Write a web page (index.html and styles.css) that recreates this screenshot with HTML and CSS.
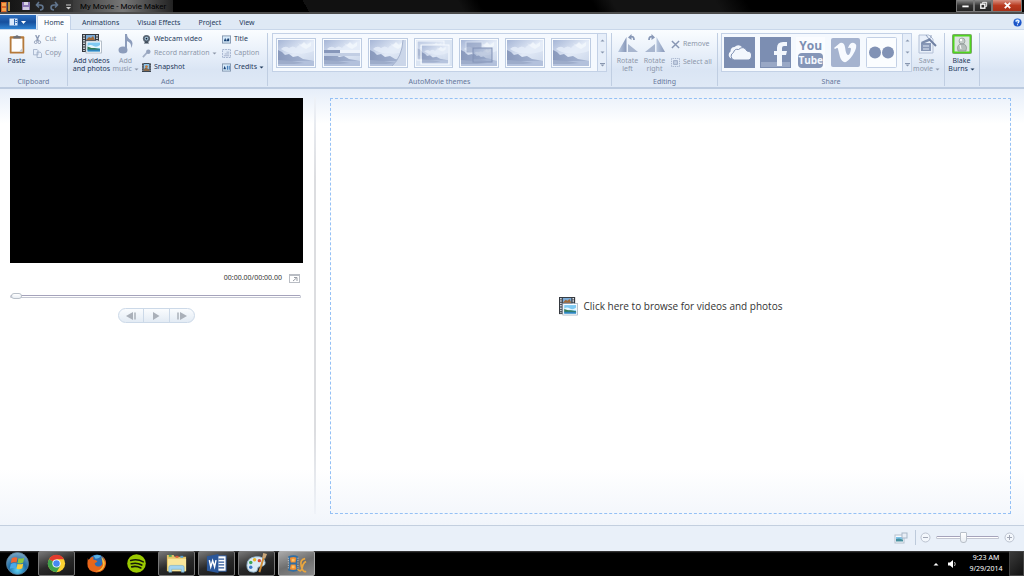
FILE: index.html
```html
<!DOCTYPE html>
<html lang="en">
<head>
    <meta charset="UTF-8">
    <meta name="viewport" content="width=device-width, initial-scale=1.0">
    <title>My Movie - Movie Maker</title>
    <link rel="stylesheet" href="styles.css">
</head>
<body>
    <!-- Shared drawings -->
    <svg class="defs" aria-hidden="true">
        <defs>
            <linearGradient id="sky" x1="0" y1="0" x2="1" y2="1">
                <stop offset="0" stop-color="#a6b6d6"/>
                <stop offset="0.5" stop-color="#e2eaf7"/>
                <stop offset="1" stop-color="#c9d5e9"/>
            </linearGradient>
            <linearGradient id="grey" x1="0" y1="0" x2="1" y2="0">
                <stop offset="0" stop-color="#b9c8df"/>
                <stop offset="1" stop-color="#8797b8"/>
            </linearGradient>
            <linearGradient id="hill" x1="0" y1="0" x2="1" y2="0">
                <stop offset="0" stop-color="#8999bc"/>
                <stop offset="1" stop-color="#a9b8d5"/>
            </linearGradient>
            <radialGradient id="orb" cx="0.5" cy="0.8" r="0.8">
                <stop offset="0" stop-color="#5fd0f0"/>
                <stop offset="0.5" stop-color="#1f6ea8"/>
                <stop offset="1" stop-color="#7fa9c4"/>
            </radialGradient>
            <symbol id="scene" viewBox="0 0 36 26">
                <rect width="36" height="26" fill="url(#sky)"/>
                <path d="M3 9q4-4 8-1q4-3 7 0q5-6 10-4l8-3v10q-12 4-18 2q-8 1-15-4z" fill="#e6edf9" opacity="0.8"/>
                <path d="M20 3l3 2 3-3 3 3 4-3v4l-5 3-4-2z" fill="#f3f7fd" opacity="0.8"/>
                <path d="M0 10l4 2 3 3 4-1 4 3 5-1 5 3 6 1 5 1v1H0z" fill="url(#hill)"/>
                <path d="M0 21h36v5H0z" fill="#b3c1dc"/>
                <path d="M0 20l14 1 12 2-10 1H0z" fill="#9dacca"/>
            </symbol>
            <symbol id="film" viewBox="0 0 20 20">
                <rect width="17" height="18" fill="#35393f"/>
                <path d="M2 1v16M15 1v16" stroke="#dfe6ee" stroke-width="1.6" stroke-dasharray="1.5 1"/>
                <rect x="4" y="1" width="9" height="5" fill="#7cabd6"/>
                <path d="M4 6l3-3 2 1 2-2 2 4z" fill="#a06a3a"/>
                <rect x="4" y="7" width="9" height="10" fill="#4c7eb0"/>
                <rect x="4" y="7" width="15.5" height="12" fill="#fbfdff" stroke="#9aa5b3" stroke-width="0.7"/>
                <rect x="5.5" y="8.5" width="12.5" height="9" fill="#7fcaf3"/>
                <path d="M5.5 12q3-2 6 0t6.500-1v3H5.500z" fill="#e4f6fd"/>
                <path d="M5.5 12.500l4 1.500h3l5.500 1v1H5.500z" fill="#357b55"/>
                <path d="M5.5 15.500H18v2H5.500z" fill="#2f86c0"/>
            </symbol>
            <symbol id="triangle" viewBox="0 0 5 3"><path d="M.5.5h4l-2 2z" fill="currentColor"/></symbol>
        </defs>
    </svg>

    <header class="titlebar">
        <div class="quick">
            <svg class="appicon" viewBox="0 0 10 11"><rect y="1" width="6" height="10" fill="#d9662a"/><path d="M1 2h4v3H1zM1 7h4v3H1z" fill="#f3a54c"/><path d="M8 1v9" stroke="#e7b94d" stroke-width="1.5"/><path d="M6 1v10" stroke="#3a5c86"/></svg>
            <button class="tool" aria-label="Save"><svg viewBox="0 0 10 10"><rect x="1" y="1" width="8" height="8" fill="#8a76b4"/><rect x="3" y="1" width="4" height="3" fill="#d9d4e6"/><rect x="2" y="6" width="6" height="3" fill="#cfc8e0"/></svg></button>
            <button class="tool" aria-label="Undo"><svg viewBox="0 0 10 10"><path d="M2 4h3q3 0 3 2.500T5 9M4 1L1.500 4 4 6.500" fill="none" stroke="#62768e" stroke-width="1.6"/></svg></button>
            <button class="tool" aria-label="Redo"><svg viewBox="0 0 10 10"><path d="M8 4H5Q2 4 2 6.500T5 9M6 1l2.500 3L6 6.500" fill="none" stroke="#62768e" stroke-width="1.6"/></svg></button>
            <button class="tool" aria-label="Customize"><svg viewBox="0 0 10 10"><path d="M3 4h5" stroke="#ccc"/><path d="M3 6h5L5.500 8.500z" fill="#ccc"/></svg></button>
        </div>
        <h1>My Movie - Movie Maker</h1>
        <div class="window-buttons">
            <button aria-label="Minimize"><svg viewBox="0 0 10 10"><path d="M1.500 6h7" stroke="#fff" stroke-width="2"/></svg></button>
            <button aria-label="Restore"><svg viewBox="0 0 10 10"><path d="M4 3V1.500h4.500V6H7" fill="none" stroke="#fff"/><rect x="2" y="3.500" width="4.500" height="4.500" fill="none" stroke="#fff" stroke-width="1.5"/></svg></button>
            <button class="close" aria-label="Close"><svg viewBox="0 0 10 10"><path d="M2 2l6 6M8 2L2 8" stroke="#fff" stroke-width="2"/></svg></button>
        </div>
    </header>

    <nav class="tabs">
        <button class="file" aria-label="Movie Maker menu"><svg viewBox="0 0 18 8"><rect x="0.500" y="0.500" width="8" height="7" fill="#dbe9fb"/><path d="M5.500 1v6M6.500 2.500H8M6.500 4.500H8" stroke="#2b66b0"/><path d="M12 3h5l-2.500 3z" fill="#fff"/></svg></button>
        <a class="active" href="#home">Home</a>
        <a href="#animations">Animations</a>
        <a href="#effects">Visual Effects</a>
        <a href="#project">Project</a>
        <a href="#view">View</a>
        <button class="help" aria-label="Help"><svg viewBox="0 0 10 10"><circle cx="5" cy="5" r="4.5" fill="#1c55c8"/><ellipse cx="5" cy="3" rx="3" ry="2" fill="#6fa4ee"/><path d="M3.500 3.800Q3.700 2.500 5 2.500T6.500 3.800T5 5.800M5 7v1" fill="none" stroke="#fff" stroke-width="1.2"/></svg></button>
    </nav>

    <div class="ribbon">
        <section class="group clipboard">
            <div class="controls">
                <button class="big"><svg viewBox="0 0 20 22"><rect x="2" y="2.500" width="16" height="19" rx="1" fill="#b5793a"/><rect x="4" y="5" width="12" height="14.5" fill="#fdfdfd"/><path d="M12 19.500l4-4v4z" fill="#c9cdd4"/><path d="M6 5V2.500h2Q10 0 12 2.500h2V5z" fill="#6c6f76"/></svg>Paste</button>
                <div class="stack">
                    <button class="small off"><svg viewBox="0 0 10 10"><path d="M3 0l3 6.500M7 0L4 6.500" stroke="#8d9bb5" stroke-width="1.5"/><circle cx="3" cy="8" r="1.5" fill="none" stroke="#8d9bb5"/><circle cx="7" cy="8" r="1.5" fill="none" stroke="#8d9bb5"/></svg>Cut</button>
                    <button class="small off"><svg viewBox="0 0 10 10"><path d="M.5.5h4l1 1v5h-5zM4.500 3.500H8l1.500 1.500v4.500h-5z" fill="#e6eefa" stroke="#a3b1ca"/></svg>Copy</button>
                </div>
            </div>
            <h2>Clipboard</h2>
        </section>
        <section class="group add">
            <div class="controls">
                <button class="big wide"><svg><use href="#film"/></svg><span>Add videos<br>and photos</span></button>
                <button class="big off"><svg viewBox="0 0 20 20"><path d="M9 15V0h2q0 4 4 6q3 3 0 8q1-5-4-7v9z" fill="#8c9cbb"/><ellipse cx="7" cy="16" rx="4.5" ry="3.5" fill="#8c9cbb"/></svg><span>Add<br>music <svg class="arrow"><use href="#triangle"/></svg></span></button>
                <div class="stack">
                    <button class="small"><svg viewBox="0 0 10 10"><circle cx="5" cy="4" r="4" fill="#596675"/><circle cx="5" cy="4" r="2" fill="#a9cbe4"/><circle cx="5" cy="4" r="1" fill="#17212c"/><path d="M2 9.500L4 7h2l2 2.500z" fill="#3f4c5b"/></svg>Webcam video</button>
                    <button class="small off"><svg viewBox="0 0 10 10"><path d="M1 9l4.500-5" stroke="#a2afc6" stroke-width="1.8"/><circle cx="7" cy="3" r="2.5" fill="#96a4be"/></svg>Record narration <svg class="arrow"><use href="#triangle"/></svg></button>
                    <button class="small"><svg viewBox="0 0 10 10"><rect width="10" height="10" fill="#333a44"/><path d="M1 0v10M9 0v10" stroke="#dde3ea" stroke-dasharray="1 1"/><rect x="2" y="1" width="6" height="8" fill="#8cc4ea"/><path d="M2 7l2-2 4 2v2H2z" fill="#8a6a4c"/><circle cx="5" cy="4" r="1.5" fill="#c77a3a"/></svg>Snapshot</button>
                </div>
                <div class="stack right">
                    <button class="small"><svg viewBox="0 0 10 10"><rect x="0.500" y="1" width="9" height="8" fill="#d8ebfb" stroke="#8295ad"/><path d="M2 7l1.500-4L5 7z" fill="#163f70"/><path d="M5 7V5h1V4h2v3z" fill="#163f70"/></svg>Title</button>
                    <button class="small off"><svg viewBox="0 0 10 10"><rect x="0.500" y="0.500" width="9" height="9" fill="#e1eaf7" stroke="#9cacc8" stroke-dasharray="2 1"/><path d="M2 7.500h6M3 5.500h5M5 3.500h3" stroke="#a0aec7"/></svg>Caption</button>
                    <button class="small"><svg viewBox="0 0 10 10"><rect x="0.500" y="1" width="9" height="8" fill="#d8ebfb" stroke="#8295ad"/><path d="M1.500 7L3 3l1.500 4z" fill="#163f70"/><path d="M6 3v4.500M8 3v4.500" stroke="#3c78b8" stroke-width="1.2"/></svg>Credits <svg class="arrow"><use href="#triangle"/></svg></button>
                </div>
            </div>
            <h2>Add</h2>
        </section>
        <section class="group themes">
            <div class="gallery">
                <button aria-label="No theme"><svg><use href="#scene"/></svg></button>
                <button aria-label="Contemporary"><svg viewBox="0 0 36 26"><use href="#scene"/><path d="M0 10h16v3H0z" fill="#8797ba"/><path d="M0 13h36v3H0z" fill="#c2cee4"/><path d="M16 10h20v3H16z" fill="#eef3fb"/></svg></button>
                <button aria-label="Cinematic"><svg viewBox="0 0 36 26"><use href="#scene"/><path d="M33 0q-1 17-11 26h14V0z" fill="#cbd6e9"/><path d="M33 0q-1 17-11 26" fill="none" stroke="#a5b3ce"/></svg></button>
                <button aria-label="Fade"><svg viewBox="0 0 36 26"><rect width="36" height="26" fill="#dbe5f3"/><use href="#scene" x="1" y="1" width="27" height="19" opacity="0.6"/><rect x="1" y="1" width="27" height="19" fill="none" stroke="#f4f8fd"/><use href="#scene" x="6" y="5" width="26" height="19" opacity="0.9"/><rect x="5" y="5" width="28" height="19" fill="none" stroke="#f8fbff"/></svg></button>
                <button aria-label="Pan and zoom"><svg viewBox="0 0 36 26"><use href="#scene"/><rect x="5" y="2" width="16" height="11" fill="#8a9abd" opacity="0.6" stroke="#dfe7f5"/><use href="#scene" x="12" y="8" width="19" height="14"/><rect x="12" y="8" width="19" height="14" fill="#8a9abd" fill-opacity="0.4" stroke="#8191b5"/></svg></button>
                <button aria-label="Black and white"><svg><use href="#scene"/></svg></button>
                <button aria-label="Sepia"><svg><use href="#scene"/></svg></button>
                <div class="scroller">
                    <button aria-label="Scroll up"><svg class="up"><use href="#triangle"/></svg></button>
                    <button aria-label="Scroll down"><svg><use href="#triangle"/></svg></button>
                    <button class="more" aria-label="More themes"><svg><use href="#triangle"/></svg></button>
                </div>
            </div>
            <h2>AutoMovie themes</h2>
        </section>
        <section class="group editing">
            <div class="controls">
                <button class="big off"><svg viewBox="0 0 20 20"><path d="M0 18L8.500 3v15z" fill="url(#grey)"/><path d="M10 10l10 8H10z" fill="#a8b6cf"/><path d="M12 3q4-1.500 4 3" fill="none" stroke="#8797b6" stroke-width="1.8"/><path d="M10 3.500L13.500 0v6z" fill="#8797b6"/></svg><span>Rotate<br>left</span></button>
                <button class="big off"><svg viewBox="0 0 20 20"><path d="M20 18L11.500 3v15z" fill="url(#grey)"/><path d="M10 10L0 18h10z" fill="#a8b6cf"/><path d="M8 3Q4 1.500 4 6" fill="none" stroke="#8797b6" stroke-width="1.8"/><path d="M10 3.500L6.500 0v6z" fill="#8797b6"/></svg><span>Rotate<br>right</span></button>
                <div class="stack pair">
                    <button class="small off"><svg viewBox="0 0 10 10"><path d="M1 1l8 8M9 1L1 9" stroke="#8796b3" stroke-width="1.6"/></svg>Remove</button>
                    <button class="small off"><svg viewBox="0 0 10 10"><rect x="0.500" y="0.500" width="9" height="9" fill="none" stroke="#95a4bf" stroke-dasharray="1 1"/><rect x="3" y="3" width="4" height="4" fill="#c8d4e7" stroke="#95a4bf"/></svg>Select all</button>
                </div>
            </div>
            <h2>Editing</h2>
        </section>
        <section class="group share">
            <div class="controls">
                <div class="gallery">
                    <button aria-label="OneDrive"><svg viewBox="0 0 31 31"><rect width="31" height="31" fill="#7c8eb2"/><path d="M7 21.500a4 4 0 0 1-.5-7q0-4.500 4-4.500q4-3.500 8 0.500" fill="#f3f7fd"/><path d="M10 23a4 4 0 0 1-.5-7.500q1-4 5-3q5-4.500 8.500 1.500q5 .5 4.500 5t-4.500 4z" fill="#f3f7fd" stroke="#7c8eb2"/></svg></button>
                    <button aria-label="Facebook"><svg viewBox="0 0 31 31"><rect width="31" height="31" fill="#7c8eb2"/><path d="M1 25h29v5H1z" fill="#99a8c6"/><path d="M17 29V18h-3v-4h3v-3q0-6 6-6h4v4h-3q-2 0-2 2v3h5l-1 4h-4v11z" fill="#f3f7fd"/></svg></button>
                    <button class="youtube"><span>You</span><span class="tube">Tube</span></button>
                    <button aria-label="Vimeo"><svg viewBox="0 0 31 31"><rect x="1" y="1" width="29" height="29" rx="2" fill="#a5b3cf"/><path d="M4 11l6-5q4-1 5 4q1 8 3 8t3-6q0-2-3-1q2-6 6-5q4 1 1 8q-4 8-9 11q-4 1-6-5l-2-8q0-2-3 0z" fill="#f7faff"/></svg></button>
                    <button aria-label="Flickr"><svg viewBox="0 0 31 31"><rect x="0.500" y="0.500" width="30" height="30" rx="1" fill="#fbfdff" stroke="#c3d0e5"/><circle cx="9" cy="15.500" r="6" fill="#8192b5"/><circle cx="22" cy="15.500" r="6" fill="#8192b5"/></svg></button>
                    <div class="scroller">
                        <button aria-label="Scroll up"><svg class="up"><use href="#triangle"/></svg></button>
                        <button aria-label="Scroll down"><svg><use href="#triangle"/></svg></button>
                        <button class="more" aria-label="More services"><svg><use href="#triangle"/></svg></button>
                    </div>
                </div>
                <button class="big save off"><svg viewBox="0 0 20 20"><path d="M2 1h10l4 4v14H2z" fill="#e9f0fa" stroke="#b3c0d6"/><rect x="4" y="9" width="10" height="8" fill="#8797b6"/><path d="M4 8l9-4 1 2.500L5 10zM5 2l3 2" fill="#7c8dad"/><path d="M6 12h6M6 15h6" stroke="#dfe8f5"/><path d="M12 5l7 7" stroke="#6f80a2" stroke-width="2"/><path d="M9 1l3 4M14 1v3" stroke="#8d9dbb"/></svg><span>Save<br>movie <svg class="arrow"><use href="#triangle"/></svg></span></button>
            </div>
            <h2>Share</h2>
        </section>
        <section class="group account">
            <div class="controls">
                <button class="big"><svg viewBox="0 0 20 20"><rect x="0.500" y="0.500" width="19" height="19" rx="1" fill="#4fd51e" stroke="#78a868"/><rect x="2.500" y="2.500" width="15" height="15" fill="#dce4e0"/><circle cx="10" cy="7" r="3" fill="#c4cbc9" stroke="#838c8a" stroke-width="0.6"/><path d="M6 17q-2-7 4-7t4 7z" fill="#b6bebc" stroke="#7d8684" stroke-width="0.6"/><circle cx="9" cy="6" r="1.2" fill="#fff"/><path d="M8 11l1 4" stroke="#fff"/></svg><span>Blake<br>Burns <svg class="arrow"><use href="#triangle"/></svg></span></button>
            </div>
        </section>
    </div>

    <main class="workspace">
        <section class="preview">
            <div class="screen"></div>
            <div class="time">
                <span>00:00.00/00:00.00</span>
                <button aria-label="Full screen"><svg viewBox="0 0 11 9"><rect x="0.500" y="0.500" width="10" height="8" fill="#fff" stroke="#b9bdc4"/><path d="M0 1h11" stroke="#b9bdc4" stroke-width="2"/><path d="M4 7l3.500-3M5 3.500h3V7" fill="none" stroke="#989da5"/></svg></button>
            </div>
            <input class="seek" type="range" min="0" max="100" value="0" aria-label="Position">
            <div class="transport">
                <button aria-label="Previous frame"><svg viewBox="0 0 10 8"><path d="M7 0v8L0 4z" fill="#aab0b9"/><path d="M9 .5v7" stroke="#aab0b9" stroke-width="1.5"/></svg></button>
                <button aria-label="Play"><svg viewBox="0 0 10 8"><path d="M2 0v8l6.500-4z" fill="#aab0b9"/></svg></button>
                <button aria-label="Next frame"><svg viewBox="0 0 10 8"><path d="M3 0v8l7-4z" fill="#aab0b9"/><path d="M1 .5v7" stroke="#aab0b9" stroke-width="1.5"/></svg></button>
            </div>
        </section>
        <button class="dropzone"><svg><use href="#film"/></svg>Click here to browse for videos and photos</button>
    </main>

    <footer class="status">
        <button aria-label="Thumbnail size"><svg class="thumbs" viewBox="0 0 14 12"><rect x="1" y="3" width="9" height="8" fill="#f8fbff" stroke="#b5c0cd"/><path d="M2 5h7v2H2z" fill="#7fc4ea"/><path d="M2 7l3-.5 4 1v2H2z" fill="#468f9e"/><rect x="8" y="1" width="5" height="5" fill="#e8eef6" stroke="#a9b7c8"/></svg></button>
        <div class="zoom">
            <button aria-label="Zoom out"><svg viewBox="0 0 11 11"><circle cx="5.5" cy="5.5" r="4.5" fill="#f3f7fc" stroke="#bcc3d0"/><path d="M3 5.500h5" stroke="#a1a7b5"/></svg></button>
            <input type="range" min="0" max="100" value="42" aria-label="Zoom">
            <button aria-label="Zoom in"><svg viewBox="0 0 11 11"><circle cx="5.5" cy="5.5" r="4.5" fill="#f3f7fc" stroke="#bcc3d0"/><path d="M3 5.500h5M5.500 3v5" stroke="#a1a7b5"/></svg></button>
        </div>
    </footer>

    <div class="taskbar">
        <button class="task start" aria-label="Start"><svg viewBox="0 0 24 24"><circle cx="12" cy="12" r="11.5" fill="url(#orb)" stroke="#5d7f97" stroke-width="0.8"/><path d="M6 6.500q3-2 6-.5l-1 5q-3-1-6 .5z" fill="#f0652f"/><path d="M13 6.500q3 1 6-.5l-1 5q-3 1.500-6 .5z" fill="#8cc63e"/><path d="M5 12.500q3-1.500 6-.5l-1 5q-3-1-6 .5z" fill="#4aa8e8"/><path d="M12 12.500q3 1 6-.5l-1 5q-3 1.500-6 .5z" fill="#fccb35"/></svg></button>
        <button class="task open" aria-label="Google Chrome"><svg viewBox="0 0 24 24"><circle cx="12" cy="12" r="9" fill="#fdd231"/><path d="M12 12L4.200 7.500A9 9 0 0 1 19.800 7.500H12z" fill="#e33b2e"/><path d="M12 12L4.200 7.500A9 9 0 0 0 12 21l4-6.700z" fill="#3fa34d"/><circle cx="12" cy="12" r="4.3" fill="#fff"/><circle cx="12" cy="12" r="3.4" fill="#4688f1"/></svg></button>
        <button class="task" aria-label="Firefox"><svg viewBox="0 0 24 24"><circle cx="12.5" cy="11.5" r="9" fill="#2d6db5"/><path d="M9 4q4-2 8 0q-2 3-6 3z" fill="#5db4e5"/><path d="M3 6q0 2 1 2q2-3 5-3q-1 2 0 3q3 0 4 2l-3 2q1 4 5 3q4-1 3-6q2 1 2 0q-1-4-3-5q5 3 5 8q-1 9-10 9.500Q2 20 2.500 12z" fill="#e8661b"/><path d="M17 5q5 5 3 10q-3 6-9 5q7-1 8-7z" fill="#fac43a"/></svg></button>
        <button class="task" aria-label="Spotify"><svg viewBox="0 0 24 24"><circle cx="12" cy="12" r="9.7" fill="#9ac900"/><path d="M6 8.800q7-2 13 1.500M6.500 12.300q6-1.600 11 1.300M7 15.500q5-1.300 9.500 1.200" fill="none" stroke="#151a08" stroke-width="1.7" stroke-linecap="round"/></svg></button>
        <button class="task open" aria-label="Windows Explorer"><svg viewBox="0 0 24 24"><path d="M2 3h7l1 2h12v15H2z" fill="#e3c365"/><path d="M3 7h19v13H3z" fill="#f8e69b"/><path d="M4 3h3v2H4z" fill="#4da75a"/><path d="M11 4h3v2h-3z" fill="#db5a3d"/><path d="M16 4h3v2h-3z" fill="#4f9bd4"/><path d="M4 21v-5q0-2 2-2h12q2 0 2 2v5h-3v-3H7v3z" fill="#a3d4ef" stroke="#6ea7c9" stroke-width="0.6"/></svg></button>
        <button class="task open" aria-label="Microsoft Word"><svg viewBox="0 0 24 24"><rect x="12" y="4" width="10" height="16" fill="#fff" stroke="#2b579a"/><path d="M14 7.500h6M14 10.500h6M14 13.500h6M14 16.500h6" stroke="#2b579a" stroke-width="1.2"/><path d="M2 4.500L14 2v20L2 19.500z" fill="#2b579a"/><path d="M4.500 8.500l1.500 7 2-6.500 2 6.500 1.500-7" fill="none" stroke="#fff" stroke-width="1.5"/></svg></button>
        <button class="task open" aria-label="Paint"><svg viewBox="0 0 24 24"><path d="M2 14Q2 6 11 5t10 6q0 4-5 4q-3 0-3 3t-4 3q-7 0-7-7z" fill="#dcebf5" stroke="#94b8cf"/><circle cx="6" cy="11" r="1.8" fill="#3fa657"/><circle cx="10" cy="8" r="1.8" fill="#e9b92f"/><circle cx="15" cy="9" r="1.8" fill="#d64b37"/><circle cx="6" cy="16" r="1.8" fill="#3a78c9"/><path d="M20 4l-5 17" stroke="#cd8b37" stroke-width="2"/><path d="M18 6l1-5 4 1-2 5z" fill="#c9a77a"/></svg></button>
        <button class="task open current" aria-label="Movie Maker"><svg viewBox="0 0 24 24"><path d="M3 5q6-3 11 0-3 7 0 14-5 3-11 0 3-7 0-14z" fill="#2f6ea5"/><path d="M5 6q4-1.500 7 0l-1 5H6zM6 13h5l1 5q-3 1.500-7 0z" fill="#f08b31"/><path d="M7 7h3v3H7zM7 14h3v3H7z" fill="#ffc15e"/><path d="M3.500 6v12M13.500 6v12" stroke="#dfeaf3" stroke-width="0.8" stroke-dasharray="1 1.500"/><path d="M13 18q4 4 5-2q1-5 4-6M21 7q-6 1-4 8t5 5" fill="none" stroke="#e9a63f" stroke-width="1.8"/></svg></button>
        <div class="tray">
            <button aria-label="Show hidden icons"><svg viewBox="0 0 10 10"><path d="M2.500 6.500L5 4l2.500 2.500z" fill="#fff"/></svg></button>
            <button aria-label="Volume"><svg viewBox="0 0 10 10"><path d="M1 3.500h2L6 1v8L3 6.500H1z" fill="#fff"/><path d="M7.500 3q1.500 2 0 4" fill="none" stroke="#bbb"/></svg></button>
            <div class="clock"><time>9:23 AM</time><time>9/29/2014</time></div>
            <button class="desktop" aria-label="Show desktop"></button>
        </div>
    </div>
</body>
</html>
```

FILE: styles.css
```css
* { box-sizing: border-box; }
body { margin: 0; height: 100vh; display: flex; flex-direction: column; background: #000; color: #1e395b; font: 7px/8px "Noto Sans", "Open Sans", sans-serif; overflow: hidden; }
button { margin: 0; padding: 0; border: none; background: none; color: inherit; font: inherit; cursor: pointer; display: flex; align-items: center; justify-content: center; }
svg { display: block; flex: none; }
h1, h2 { margin: 0; font-size: 7px; font-weight: normal; }
a { color: inherit; text-decoration: none; }
.defs { position: absolute; width: 0; height: 0; }
.arrow { display: inline-block; width: 5px; height: 3px; vertical-align: middle; }

/* title bar */
.titlebar { display: flex; flex: none; height: 14px; background: linear-gradient(60deg, #000 30%, #111 30%, #111 45%, #000 47%, #000 58%, #131313 60%, #131313 70%, #000 73%); border-bottom: 2px solid #4c4c4c; }
.quick { display: flex; align-items: center; gap: 4px; padding-left: 1px; background: linear-gradient(90deg, #111, #333); }
.appicon { width: 10px; height: 11px; margin-right: 6px; }
.tool svg { width: 10px; height: 10px; }
.titlebar h1 { padding: 1px 7px; font-family: Roboto, "Noto Sans", sans-serif; font-size: 8px; line-height: 11px; color: #000; background: linear-gradient(90deg, #3a3a3a, #777 50%, #222); }
.window-buttons { display: flex; margin: 0 2px 0 auto; height: 12px; }
.window-buttons button { width: 18px; border: 1px solid #777; border-top: none; background: linear-gradient(#8a8a8a, #333 50%, #222); }
.window-buttons .close { width: 30px; background: linear-gradient(#d99282, #b93a20 50%, #a83018); }
.window-buttons svg { width: 9px; height: 9px; }

/* tabs */
.tabs { display: flex; flex: none; height: 16px; padding-top: 1px; background: #dfe9f5; border-bottom: 1px solid #c9d7ea; }
.tabs a { padding: 3px 9px; line-height: 9px; }
.tabs .active { margin: 0 2px -1px 1px; padding: 2px 6px; background: linear-gradient(#fff, #f9fcff); border: 1px solid #c3d2e8; border-bottom: none; border-radius: 2px 2px 0 0; }
.file { width: 36px; background: linear-gradient(#2d6fc0, #174f9c 50%, #2f83d3); }
.file svg { width: 18px; height: 8px; }
.help { margin-left: auto; width: 14px; }
.help svg { width: 9px; height: 9px; }

/* ribbon */
.ribbon { display: flex; flex: none; height: 59px; padding: 3px 0 1px; background: linear-gradient(#fafdff, #e6eef9 45%, #dae5f4 70%, #dfe9f6); border-bottom: 2px solid #bccbe0; }
.group { display: flex; flex-direction: column; border-right: 1px solid #c0cee2; padding: 0 3px; }
.group h2 { margin-top: auto; text-align: center; line-height: 9px; color: #66779a; }
.controls { display: flex; align-items: flex-start; }
.clipboard { width: 68px; }
.add { width: 200px; }
.themes { width: 344px; padding: 0 4px; }
.editing { width: 106px; padding: 0 2px; }
.share { width: 227px; }
.account { width: 35px; }
.big { flex-direction: column; width: 27px; white-space: nowrap; text-align: center; }
.big > svg { width: 20px; height: 20px; margin: 1px 0 3px; }
.wide { width: 41px; }
.off { color: #8d97aa; }
.stack { display: flex; flex-direction: column; gap: 4px; margin-left: 3px; padding-top: 1px; }
.right { margin-left: auto; }
.pair { gap: 8px; padding-top: 6px; }
.small { gap: 3px; height: 10px; justify-content: flex-start; white-space: nowrap; }
.small svg:first-child { width: 9px; height: 9px; }
.small .arrow { margin-left: -1px; }
.gallery { display: flex; flex: none; gap: 6px; height: 39px; padding-left: 3px; align-items: center; background: #f5f9fe; border: 1px solid #c3d1e6; }
.themes .gallery > button { width: 40px; height: 30px; background: #f9fcff; border: 1px solid #bdcce2; }
.themes .gallery > button svg { width: 36px; height: 26px; }
.share .gallery { gap: 5px; width: 191px; padding-left: 2px; }
.share .gallery > button, .share .gallery > button svg { width: 31px; height: 31px; }
.scroller { display: flex; flex-direction: column; width: 9px; height: 100%; margin-left: auto; border-left: 1px solid #c3d1e6; background: #e6eef9; color: #8997b0; }
.scroller button { flex: 1; }
.scroller svg { width: 5px; height: 3px; }
.scroller .up { transform: rotate(180deg); }
.more svg { border-top: 1px solid #8997b0; height: 4px; }
.share .youtube { flex-direction: column; font: bold 12px/15px "Open Sans", sans-serif; color: #7c8eb2; background: #fafcff; }
.tube { width: 25px; border-radius: 4px; background: #8596b8; color: #f3f7fd; font-size: 10px; }
.save { width: 30px; }

/* workspace */
.workspace { display: flex; flex: 1; padding: 8px 13px 11px 10px; background: linear-gradient(#e6eef9, #fff 35px, #fff 380px, #f1f5fb); }
.preview { flex: none; width: 306px; padding: 1px 11px 0 0; border-right: 2px solid; border-image: linear-gradient(#eef2f8, #dcdde0 20%, #dcdde0 80%, #eff3f9) 1; }
.screen { height: 165px; background: #000; }
.time { display: flex; justify-content: flex-end; align-items: center; gap: 7px; height: 10px; margin: 10px 3px 0 0; color: #333; }
.time svg { width: 11px; height: 9px; }
input[type="range"] { display: block; margin: 0; height: 10px; appearance: none; background: none; }
input[type="range"]::-webkit-slider-runnable-track { height: 3px; border: 1px solid #c3c6d2; border-top-color: #a5a3bb; border-radius: 2px; background: #fff; }
input[type="range"]::-webkit-slider-thumb { appearance: none; background: linear-gradient(#fff, #e9eef4); border: 1px solid #b9c0c9; }
.preview .seek { width: 291px; margin: 8px 0 7px; }
.seek::-webkit-slider-thumb { width: 11px; height: 6px; margin-top: -3px; border-radius: 3px; }
.transport { display: flex; width: 77px; height: 15px; margin: 0 auto; border: 1px solid #ccd9e8; border-radius: 8px; background: linear-gradient(#fafcfe, #e3ebf4); }
.transport button { flex: 1; }
.transport button + button { border-left: 1px solid #ccd9e8; }
.transport svg { width: 10px; height: 8px; }
.dropzone { flex: 1; gap: 6px; margin: 1px 0 0 14px; border: 1px dashed #94c0f5; font-family: "Open Sans", sans-serif; font-size: 10px; line-height: 14px; color: #333; }
.dropzone svg { width: 19px; height: 19px; }

/* status bar */
.status { display: flex; flex: none; align-items: center; justify-content: flex-end; gap: 7px; height: 26px; padding: 0 9px 2px 0; background: #e9f0f9; border-top: 1px solid #c3cfdf; }
.thumbs { width: 14px; height: 12px; }
.zoom { display: flex; align-items: center; gap: 5px; padding-left: 4px; border-left: 1px solid #bdcadb; height: 15px; }
.zoom svg { width: 11px; height: 11px; }
.zoom input { width: 63px; }
.zoom input::-webkit-slider-thumb { width: 7px; height: 11px; margin-top: -5px; border-radius: 1px 1px 3px 3px; }

/* taskbar */
.taskbar { display: flex; flex: none; gap: 3px; height: 25px; background: linear-gradient(#444, #000 2px); color: #fff; }
.task { width: 37px; height: 25px; border: 1px solid transparent; border-radius: 2px; }
.task svg { width: 23px; height: 23px; }
.start { width: 35px; }
.open { border-color: #777; background: linear-gradient(160deg, #777, #2a2a2a 50%, #161616); }
.current { border-color: #aaa; background: linear-gradient(160deg, #aaa, #6e6e6e 50%, #8c8c8c); }
.tray { display: flex; align-items: center; margin-left: auto; }
.tray svg { width: 10px; height: 10px; margin-right: 6px; }
.clock { display: flex; flex-direction: column; gap: 1px; width: 46px; text-align: center; line-height: 10px; }
.desktop { width: 15px; height: 25px; border: 1px solid #444; background: linear-gradient(135deg, #3a3a3a, #111); }
```
